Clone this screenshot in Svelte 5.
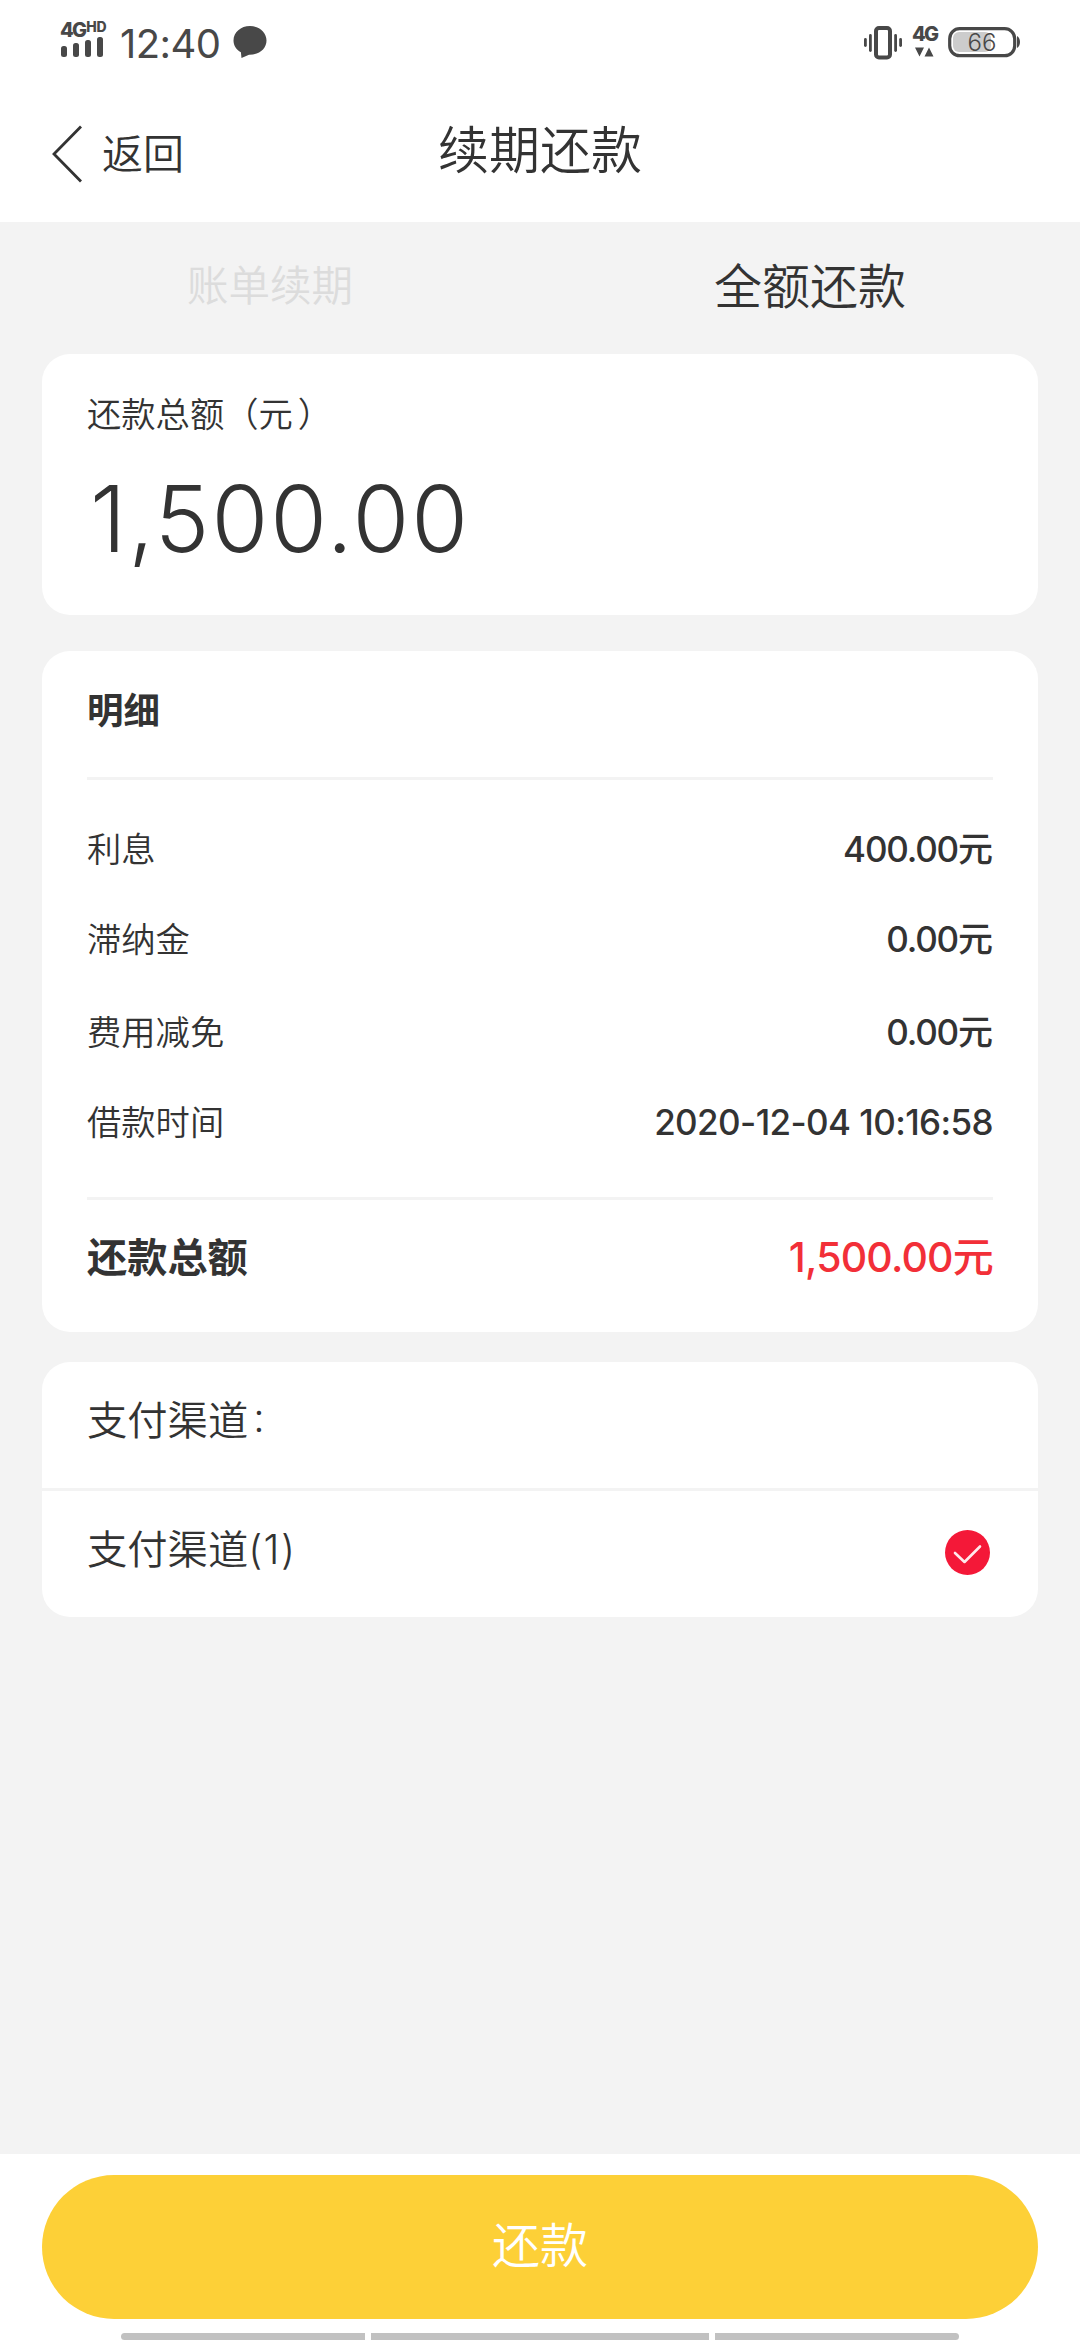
<script>
  const details = [
    { label: '利息', value: '400.00', unit: '元' },
    { label: '滞纳金', value: '0.00', unit: '元' },
    { label: '费用减免', value: '0.00', unit: '元' },
    { label: '借款时间', value: '2020-12-04 10:16:58', date: true }
  ];
</script>

<div class="screen">
  <div class="status">
    <div class="status-left">
      <div class="signal">
        <div class="net-row"><span class="net">4G</span><span class="hd">HD</span></div>
        <svg width="44" height="20" viewBox="0 0 44 20">
          <rect x="1" y="9" width="6" height="11" rx="2.5" />
          <rect x="13" y="6" width="6" height="14" rx="2.5" />
          <rect x="25" y="3" width="6" height="17" rx="2.5" />
          <rect x="37" y="0" width="6" height="20" rx="2.5" />
        </svg>
      </div>
      <span class="clock">12:40</span>
      <svg class="bubble" width="34" height="34" viewBox="0 0 34 34">
        <path d="M17 1C7.800 1 .5 7.200 .5 15.500c0 5 2.700 9.200 7.400 11.800L8.500 33l7.500-3.200C26 30 33.500 23.800 33.500 15.500S26.200 1 17 1z" />
      </svg>
    </div>
    <div class="status-right">
      <svg width="38" height="34" viewBox="0 0 38 34">
        <rect x="12" y="2" width="14" height="29.500" rx="3" fill="none" stroke="#484848" stroke-width="4" />
        <rect x="0" y="12" width="2.800" height="9" rx="1.400" />
        <rect x="5" y="8" width="2.800" height="18" rx="1.400" />
        <rect x="30.200" y="8" width="2.800" height="18" rx="1.400" />
        <rect x="35.200" y="12" width="2.800" height="9" rx="1.400" />
      </svg>
      <div class="mobile">
        <span class="net">4G</span>
        <svg width="24" height="10" viewBox="0 0 24 10">
          <path d="M3 .5h9l-4.500 9zM12.500 9.500h9l-4.500-9z" />
        </svg>
      </div>
      <svg width="74" height="34" viewBox="0 0 74 34">
        <rect x="5" y="6" width="38" height="20" rx="6" fill="#ccc" />
        <rect x="1.700" y="2.700" width="65" height="27" rx="10" fill="none" stroke="#484848" stroke-width="3.200" />
        <path d="M69 10c4 2 4 10 0 12z" />
        <text class="level" x="19.500" y="25" textLength="29" lengthAdjust="spacingAndGlyphs">66</text>
      </svg>
    </div>
  </div>

  <header class="nav">
    <button class="back">
      <svg width="32" height="58" viewBox="0 0 32 58">
        <path d="M30 1.500 3 29l27 27.500" fill="none" stroke="#333" stroke-width="2.800" />
      </svg>
      <span>返回</span>
    </button>
    <h1>续期还款</h1>
  </header>

  <nav class="tabs">
    <span class="tab">账单续期</span>
    <span class="tab active">全额还款</span>
  </nav>

  <main>
    <section class="card amount">
      <div class="caption">还款总额（元<span class="close">）</span></div>
      <div class="figure">1,500.00</div>
    </section>

    <section class="card detail">
      <h2>明细</h2>
      <ul>
        {#each details as item}
          <li>
            <span class="label">{item.label}</span>
            <span class="value" class:date={item.date}>{item.value}{#if item.unit}<span class="unit">{item.unit}</span>{/if}</span>
          </li>
        {/each}
      </ul>
      <div class="total">
        <span>还款总额</span>
        <span class="sum">1,500.00元</span>
      </div>
    </section>

    <section class="card channels">
      <div class="channel heading">支付渠道<span class="colon">:</span></div>
      <div class="channel">
        <span class="name">支付渠道<span class="index">(1)</span></span>
        <svg class="check" width="45" height="45" viewBox="0 0 45 45">
          <circle cx="22.500" cy="22.500" r="22.500" fill="#f41838" />
          <path d="M10 23 19.500 32 35 16.500" fill="none" stroke="#ffe9ec" stroke-width="2.600" stroke-linecap="round" stroke-linejoin="round" />
        </svg>
      </div>
    </section>
  </main>

  <footer>
    <button class="pay">还款</button>
    <div class="handles">
      <i></i><i class="middle"></i><i></i>
    </div>
  </footer>
</div>

<style>
  :global(body) { margin: 0; background: #f3f3f3; }
  .screen {
    width: 1080px;
    height: 2340px;
    display: flex;
    flex-direction: column;
    overflow: hidden;
    background: #f3f3f3;
    color: #333;
    font-family: Inter, "Noto Sans CJK SC", sans-serif;
    font-weight: 350;
  }
  h1, h2, ul { margin: 0; padding: 0; font-weight: 350; list-style: none; }
  button { border: 0; padding: 0; background: none; color: inherit; font: inherit; }
  svg { display: block; flex: none; }

  .status {
    height: 84px;
    box-sizing: border-box;
    padding: 17px 58px 0 60px;
    display: flex;
    justify-content: space-between;
    background: #fff;
    color: #484848;
  }
  .status svg { fill: #484848; }
  .status-left, .status-right { display: flex; align-items: flex-start; }
  .status-right { padding-top: 9px; gap: 10px; }
  .signal { width: 48px; }
  .net-row { display: flex; height: 20px; }
  .net { font-size: 20px; line-height: 26px; font-weight: 800; letter-spacing: -1.800px; }
  .hd { margin-left: 1px; font-size: 14px; line-height: 20px; font-weight: 800; letter-spacing: -0.300px; }
  .mobile { width: 26px; height: 34px; margin-top: -5px; }
  .mobile .net { display: block; }
  .level { font-size: 24px; font-weight: 300; }
  .clock {
    width: 112px;
    margin: 3px 0 0 12px;
    font-size: 40px;
    line-height: 48px;
    font-weight: 400;
    letter-spacing: -0.600px;
  }
  .bubble { margin: 8px 0 0 1px; }

  .nav {
    height: 138px;
    display: grid;
    grid-template-columns: 1fr auto 1fr;
    background: #fff;
  }
  .back {
    height: 58px;
    margin: 41px 0 0 51px;
    display: flex;
    align-items: center;
    gap: 19px;
    font-size: 41px;
  }
  .back span { padding-bottom: 6px; }
  h1 { padding-top: 35px; font-size: 51px; line-height: 64px; }

  .tabs { height: 132px; display: flex; }
  .tab {
    flex: 1;
    text-align: center;
    line-height: 129px;
    font-size: 41.500px;
    color: #dcdcdc;
  }
  .active { font-size: 48px; color: #333; }

  main { flex: 1; padding: 0 42px; }
  .card { background: #fff; border-radius: 28px; }
  .amount { height: 261px; box-sizing: border-box; padding: 35px 45px 0; }
  .caption { font-size: 34.300px; line-height: 52px; }
  .close { margin-left: 5px; }
  .figure {
    margin: 20px 0 0 3px;
    font-size: 92px;
    line-height: 116px;
    letter-spacing: 2px;
    font-weight: 340;
  }

  .detail {
    height: 681px;
    box-sizing: border-box;
    margin-top: 36px;
    padding: 0 45px;
  }
  h2 {
    height: 126px;
    border-bottom: 3px solid #f3f3f3;
    font-size: 36.500px;
    line-height: 120px;
    font-weight: 700;
  }
  ul { height: 420px; box-sizing: border-box; padding-top: 40px; border-bottom: 3px solid #f3f3f3; }
  li {
    height: 60px;
    margin-bottom: 30px;
    display: flex;
    justify-content: space-between;
    align-items: center;
    line-height: 60px;
  }
  li:nth-child(3) { margin-top: 33px; }
  .label { font-size: 34.300px; }
  .value { padding-bottom: 2px; font-size: 35px; font-weight: 500; letter-spacing: -1.200px; }
  .unit { font-weight: 500; letter-spacing: 0; }
  .date { letter-spacing: -0.600px; }
  .total {
    height: 108px;
    display: flex;
    justify-content: space-between;
    align-items: center;
    font-size: 40.200px;
    font-weight: 700;
  }
  .sum { color: #f22f38; font-weight: 550; font-size: 41px; letter-spacing: -0.800px; }

  .channels { height: 255px; margin-top: 30px; }
  .channel {
    height: 126px;
    box-sizing: border-box;
    padding: 0 48px 3px 45px;
    display: flex;
    align-items: center;
    justify-content: space-between;
    font-size: 40.300px;
  }
  .name { margin-top: -12px; }
  .index { letter-spacing: 1.400px; }
  .heading {
    height: 129px;
    padding-bottom: 16px;
    justify-content: flex-start;
    border-bottom: 3px solid #f3f3f3;
  }
  .colon { margin-left: 5px; }

  footer {
    height: 186px;
    box-sizing: border-box;
    padding: 21px 42px 0;
    background: #fff;
  }
  .pay {
    display: block;
    width: 100%;
    height: 144px;
    box-sizing: border-box;
    padding-bottom: 10px;
    border-radius: 72px;
    background: #fdd037;
    color: #fff;
    font-size: 48px;
  }
  .handles { display: flex; gap: 6px; padding: 14px 79px 0; }
  .handles i { flex: 244; height: 7px; background: #c1c1c1; border-radius: 4px 0 0 4px; }
  .handles .middle { flex: 338; border-radius: 0; }
  .handles i:last-child { border-radius: 0 4px 4px 0; }
</style>
